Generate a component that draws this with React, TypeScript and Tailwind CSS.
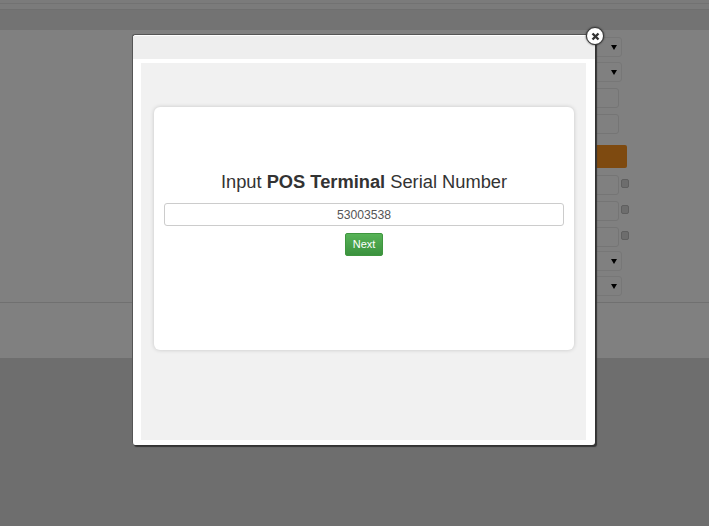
import React from "react";

const SelectBox = () => (
  <div className="h-[20px] w-[130px] rounded-[3px] border border-[#777] flex items-center justify-end pr-[4px]">
    <span className="w-0 h-0 border-x-[3px] border-x-transparent border-t-[5px] border-t-black" />
  </div>
);

const InputBox = ({ check }: { check?: boolean }) => (
  <div className="h-[20px] flex items-center w-[138px]">
    <div className="h-full w-[127px] rounded-[3px] border border-[#757575]" />
    {check && (
      <span className="ml-[2px] mb-[4px] w-[8px] h-[9px] rounded-[2px] bg-[#6d6d6d] border border-[#5f5f5f]" />
    )}
  </div>
);

const App = () => {
  return (
    <div className="relative w-[709px] h-[526px] overflow-hidden bg-[#6e6e6e] font-['Liberation_Sans',Arial,sans-serif]">
      {/* page behind the overlay */}
      <div className="h-[358px] bg-[#808080] flex flex-col">
        <div className="h-[4px] bg-[#7b7b7b] border-b border-[#727272]" />
        <div className="h-[6px] bg-[#7b7b7b] border-b border-[#6f6f6f]" />
        <div className="h-[20px] bg-[#737373]" />
        <div className="h-[273px] border-b border-[#707070] flex justify-end pr-[79px] pt-[7px]">
          <div className="w-[138px] flex flex-col">
            <SelectBox />
            <div className="mt-[5px]">
              <SelectBox />
            </div>
            <div className="mt-[6px]">
              <InputBox />
            </div>
            <div className="mt-[6px]">
              <InputBox />
            </div>
            <div className="mt-[11px] h-[23px] w-[135px] rounded-[2px] bg-[#7e4a10]" />
            <div className="mt-[7px] flex flex-col gap-[6px]">
              <InputBox check />
              <InputBox check />
              <InputBox check />
            </div>
            <div className="mt-[4px]">
              <SelectBox />
            </div>
            <div className="mt-[5px]">
              <SelectBox />
            </div>
          </div>
        </div>
      </div>

      {/* modal */}
      <div className="absolute left-[132px] top-[34px] w-[463px] h-[411px] rounded-[3px] bg-white border-t border-l border-[#555] shadow-[2px_2px_1px_#333] flex flex-col">
        <div className="h-[23px] mt-px bg-[#eeeeee]" />
        <div className="flex-1 pt-[4px] pb-[5px] pl-[8px] pr-[9px]">
          <div className="h-full bg-[#f1f1f1] pt-[44px] pl-[13px] pr-[12px]">
            <div className="h-[243px] rounded-[6px] bg-white shadow-[0_0_4px_rgba(0,0,0,0.18)] px-[10px] pt-[64px] flex flex-col items-center">
              <h1 className="text-[18.3px] leading-[22px] text-[#333] whitespace-nowrap">
                Input <b className="font-bold">POS Terminal</b> Serial Number
              </h1>
              <input
                readOnly
                value="53003538"
                className="mt-[10px] w-full h-[23px] rounded-[3px] bg-white border border-[#ccc] text-center text-[12.2px] text-[#555] outline-none"
              />
              <button className="mt-[7px] w-[38px] h-[23px] rounded-[2px] border border-[#3f963f] bg-gradient-to-b from-[#57b357] to-[#3b923e] text-[11px] text-white">
                Next
              </button>
            </div>
          </div>
        </div>
        <span className="absolute right-[-9px] top-[-8px] w-[18px] h-[18px] rounded-full bg-white border-[1.5px] border-[#333] flex items-center justify-center shadow-[0_0_2px_#222]">
          <svg width="9" height="9" viewBox="0 0 9 9" fill="none" stroke="#333" strokeWidth="2.4">
            <path d="M1.5 1.5l6 6M7.5 1.5l-6 6" />
          </svg>
        </span>
      </div>
    </div>
  );
};

export default App;
